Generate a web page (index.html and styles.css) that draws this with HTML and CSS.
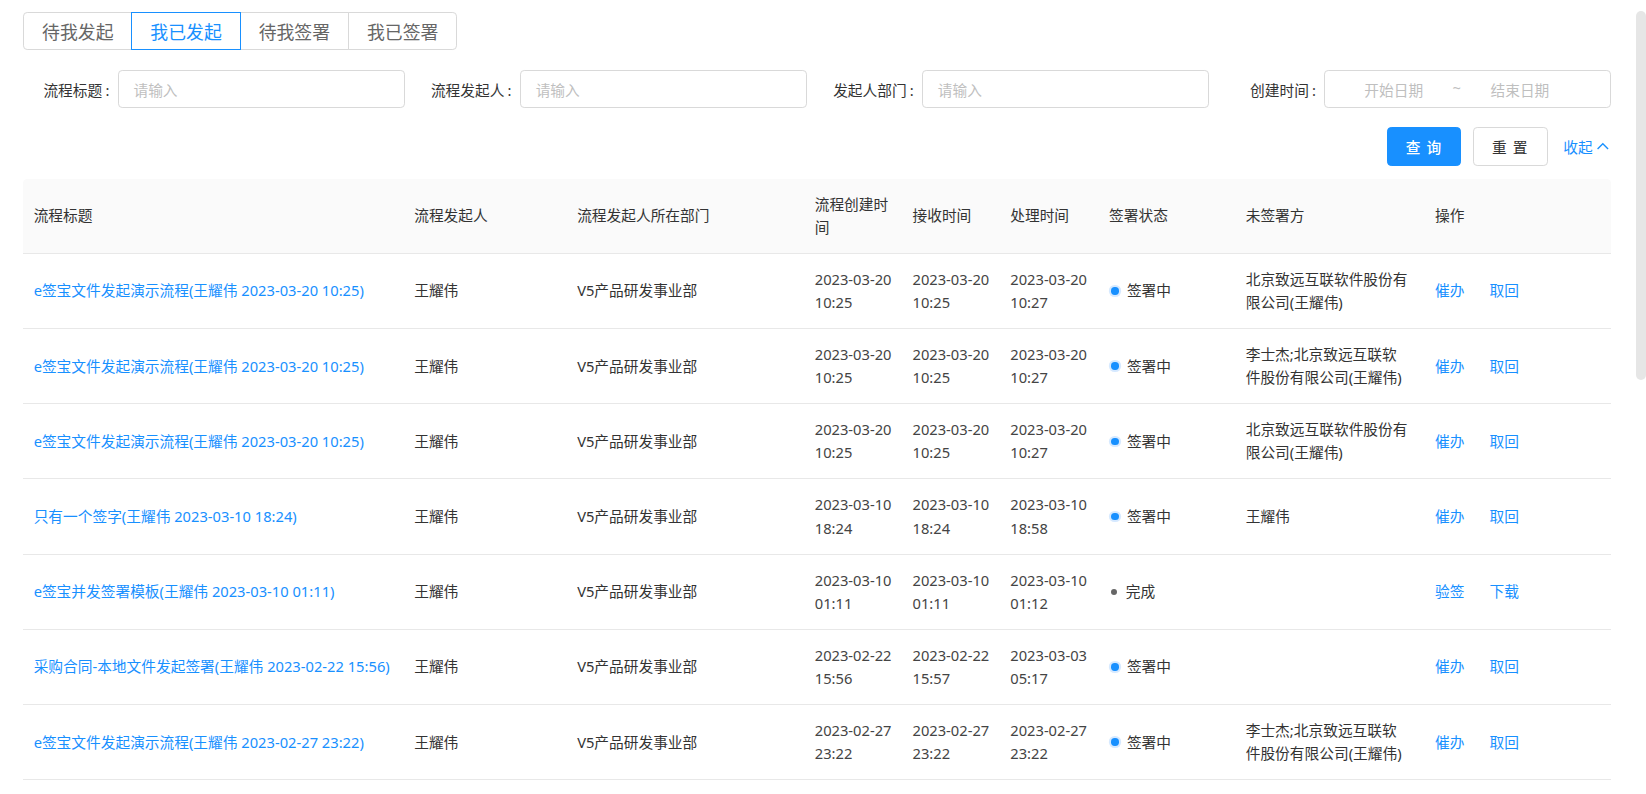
FILE: index.html
```html
<!DOCTYPE html>
<html lang="zh-CN">
<head>
<meta charset="utf-8">
<title>我已发起</title>
<link rel="stylesheet" href="styles.css">
</head>
<body>
<div class="page">
  <div class="tabs">
    <div class="tab">待我发起</div>
    <div class="tab active">我已发起</div>
    <div class="tab">待我签署</div>
    <div class="tab">我已签署</div>
  </div>

  <div class="filters">
    <div class="field">
      <label class="label">流程标题<span class="colon">:</span></label>
      <div class="input"><span class="ph">请输入</span></div>
    </div>
    <div class="field">
      <label class="label">流程发起人<span class="colon">:</span></label>
      <div class="input"><span class="ph">请输入</span></div>
    </div>
    <div class="field">
      <label class="label">发起人部门<span class="colon">:</span></label>
      <div class="input"><span class="ph">请输入</span></div>
    </div>
    <div class="field">
      <label class="label">创建时间<span class="colon">:</span></label>
      <div class="input range">
        <span class="ph part">开始日期</span>
        <span class="ph sep">~</span>
        <span class="ph part">结束日期</span>
      </div>
    </div>
  </div>

  <div class="actions">
    <button class="btn primary">查 询</button>
    <button class="btn">重 置</button>
    <a class="collapse">收起
      <svg width="13" height="12" viewBox="0 0 13 12"><polyline points="1.5,8.5 6.5,3.5 11.5,8.5" fill="none" stroke="#1890ff" stroke-width="1.3"/></svg>
    </a>
  </div>

  <table class="grid">
    <colgroup>
      <col style="width:362px">
      <col style="width:155px">
      <col style="width:226px">
      <col style="width:93px">
      <col style="width:93px">
      <col style="width:94px">
      <col style="width:130px">
      <col style="width:180px">
      <col style="width:177px">
    </colgroup>
    <thead>
      <tr>
        <th>流程标题</th>
        <th>流程发起人</th>
        <th>流程发起人所在部门</th>
        <th>流程创建时间</th>
        <th>接收时间</th>
        <th>处理时间</th>
        <th>签署状态</th>
        <th>未签署方</th>
        <th>操作</th>
      </tr>
    </thead>
    <tbody>
      <tr>
        <td><a class="link title">e签宝文件发起演示流程(王耀伟 2023-03-20 10:25)</a></td>
        <td>王耀伟</td>
        <td>V5产品研发事业部</td>
        <td><span class="d">2023-03-20</span><span class="d">10:25</span></td>
        <td><span class="d">2023-03-20</span><span class="d">10:25</span></td>
        <td><span class="d">2023-03-20</span><span class="d">10:27</span></td>
        <td><span class="status"><i class="dot busy"></i>签署中</span></td>
        <td class="party">北京致远互联软件股份有限公司(王耀伟)</td>
        <td><span class="ops"><a class="link">催办</a><a class="link">取回</a></span></td>
      </tr>
      <tr>
        <td><a class="link title">e签宝文件发起演示流程(王耀伟 2023-03-20 10:25)</a></td>
        <td>王耀伟</td>
        <td>V5产品研发事业部</td>
        <td><span class="d">2023-03-20</span><span class="d">10:25</span></td>
        <td><span class="d">2023-03-20</span><span class="d">10:25</span></td>
        <td><span class="d">2023-03-20</span><span class="d">10:27</span></td>
        <td><span class="status"><i class="dot busy"></i>签署中</span></td>
        <td class="party">李士杰;北京致远互联软件股份有限公司(王耀伟)</td>
        <td><span class="ops"><a class="link">催办</a><a class="link">取回</a></span></td>
      </tr>
      <tr>
        <td><a class="link title">e签宝文件发起演示流程(王耀伟 2023-03-20 10:25)</a></td>
        <td>王耀伟</td>
        <td>V5产品研发事业部</td>
        <td><span class="d">2023-03-20</span><span class="d">10:25</span></td>
        <td><span class="d">2023-03-20</span><span class="d">10:25</span></td>
        <td><span class="d">2023-03-20</span><span class="d">10:27</span></td>
        <td><span class="status"><i class="dot busy"></i>签署中</span></td>
        <td class="party">北京致远互联软件股份有限公司(王耀伟)</td>
        <td><span class="ops"><a class="link">催办</a><a class="link">取回</a></span></td>
      </tr>
      <tr>
        <td><a class="link title">只有一个签字(王耀伟 2023-03-10 18:24)</a></td>
        <td>王耀伟</td>
        <td>V5产品研发事业部</td>
        <td><span class="d">2023-03-10</span><span class="d">18:24</span></td>
        <td><span class="d">2023-03-10</span><span class="d">18:24</span></td>
        <td><span class="d">2023-03-10</span><span class="d">18:58</span></td>
        <td><span class="status"><i class="dot busy"></i>签署中</span></td>
        <td class="party">王耀伟</td>
        <td><span class="ops"><a class="link">催办</a><a class="link">取回</a></span></td>
      </tr>
      <tr>
        <td><a class="link title">e签宝并发签署模板(王耀伟 2023-03-10 01:11)</a></td>
        <td>王耀伟</td>
        <td>V5产品研发事业部</td>
        <td><span class="d">2023-03-10</span><span class="d">01:11</span></td>
        <td><span class="d">2023-03-10</span><span class="d">01:11</span></td>
        <td><span class="d">2023-03-10</span><span class="d">01:12</span></td>
        <td><span class="status"><i class="dot done"></i>完成</span></td>
        <td class="party"></td>
        <td><span class="ops"><a class="link">验签</a><a class="link">下载</a></span></td>
      </tr>
      <tr>
        <td><a class="link title">采购合同-本地文件发起签署(王耀伟 2023-02-22 15:56)</a></td>
        <td>王耀伟</td>
        <td>V5产品研发事业部</td>
        <td><span class="d">2023-02-22</span><span class="d">15:56</span></td>
        <td><span class="d">2023-02-22</span><span class="d">15:57</span></td>
        <td><span class="d">2023-03-03</span><span class="d">05:17</span></td>
        <td><span class="status"><i class="dot busy"></i>签署中</span></td>
        <td class="party"></td>
        <td><span class="ops"><a class="link">催办</a><a class="link">取回</a></span></td>
      </tr>
      <tr>
        <td><a class="link title">e签宝文件发起演示流程(王耀伟 2023-02-27 23:22)</a></td>
        <td>王耀伟</td>
        <td>V5产品研发事业部</td>
        <td><span class="d">2023-02-27</span><span class="d">23:22</span></td>
        <td><span class="d">2023-02-27</span><span class="d">23:22</span></td>
        <td><span class="d">2023-02-27</span><span class="d">23:22</span></td>
        <td><span class="status"><i class="dot busy"></i>签署中</span></td>
        <td class="party">李士杰;北京致远互联软件股份有限公司(王耀伟)</td>
        <td><span class="ops"><a class="link">催办</a><a class="link">取回</a></span></td>
      </tr>
    </tbody>
  </table>
</div>
<div class="scroll-thumb"></div>
</body>
</html>
```

FILE: styles.css
```css
* { box-sizing: border-box; }
html, body { margin: 0; padding: 0; background: #fff; }
body {
  font-family: "Noto Sans", "Noto Sans CJK SC", sans-serif;
  font-size: 14px;
  color: #333;
  overflow: hidden;
  zoom: 1.0513;
}
.page {
  width: 1533px;
  padding: 11px 0 0 22px;
}

/* tabs */
.tabs { display: flex; }
.tab {
  width: 104px;
  height: 37px;
  display: flex;
  align-items: center;
  justify-content: center;
  font-size: 17px;
  color: #666;
  border: 1px solid #d9d9d9;
  margin-left: -1px;
  background: #fff;
}
.tab:first-child { margin-left: 0; border-radius: 4px 0 0 4px; }
.tab:last-child { border-radius: 0 4px 4px 0; }
.tab.active { color: #1890ff; border-color: #1890ff; position: relative; z-index: 1; }

/* filters */
.filters {
  display: flex;
  gap: 19.6px;
  margin-top: 19px;
}
.field { display: flex; align-items: center; }
.label {
  width: 90px;
  text-align: right;
  color: #333;
  white-space: nowrap;
}
.colon { margin: 0 8px 0 3px; }
.input {
  width: 273px;
  height: 36px;
  border: 1px solid #d9d9d9;
  border-radius: 4px;
  display: flex;
  align-items: center;
  padding: 0 14px;
}
.ph { color: #bfbfbf; }
.range { padding: 0 32px 0 11px; }
.range .part { flex: 1; text-align: center; }
.range .sep { width: 12px; text-align: center; margin-top: -4px; }

/* actions */
.actions {
  display: flex;
  justify-content: flex-end;
  align-items: center;
  margin-top: 18px;
  width: 1509px;
}
.btn {
  width: 71px;
  height: 37px;
  border: 1px solid #d9d9d9;
  border-radius: 4px;
  background: #fff;
  color: #333;
  font-family: inherit;
  font-size: 14px;
  margin-left: 11px;
  padding: 0;
  letter-spacing: 1px;
}
.btn.primary {
  background: #1890ff;
  border-color: #1890ff;
  color: #fff;
  font-weight: 500;
  margin-left: 0;
}
.collapse {
  color: #1890ff;
  margin-left: 15px;
  display: flex;
  align-items: center;
  gap: 3px;
  white-space: nowrap;
}

/* table */
.grid {
  width: 1510px;
  table-layout: fixed;
  border-collapse: separate;
  border-spacing: 0;
  margin-top: 12px;
}
.grid th, .grid td {
  padding: 13.3px 10px;
  line-height: 22px;
  text-align: left;
  vertical-align: middle;
  border-bottom: 1px solid #e8e8e8;
  font-weight: normal;
  color: #333;
}
.grid th { background: #fafafa; }
.grid th:first-child { border-top-left-radius: 4px; }
.grid th:last-child { border-top-right-radius: 4px; }
.grid td.party { padding-right: 14px; }
.d { display: block; color: #444; white-space: nowrap; }
.link { color: #1890ff; }
.title { white-space: nowrap; }
.ops { display: flex; gap: 24px; }
.status { display: flex; align-items: center; gap: 8px; color: #333; }
.dot {
  display: inline-block;
  width: 7px;
  height: 7px;
  border-radius: 50%;
  margin-left: 2px;
}
.dot.busy { background: #1890ff; box-shadow: 0 0 0 2px #d6e9ff; }
.dot.done { background: #666; width: 6px; height: 6px; }

.scroll-thumb {
  position: fixed;
  right: 0;
  top: 10.5px;
  width: 9.5px;
  height: 351px;
  background: #e6e6e6;
  border-radius: 5px;
}
```
